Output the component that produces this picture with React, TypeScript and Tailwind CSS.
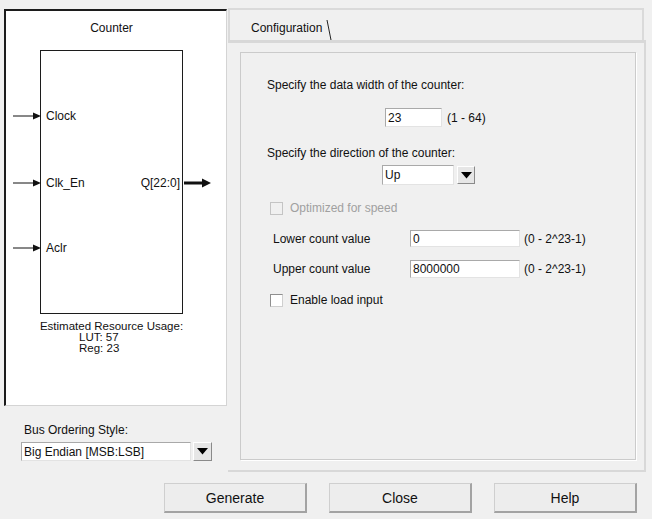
import React from "react";

function InArrow() {
  return (
    <svg className="absolute left-[-28px] top-[2px]" width="28" height="10" viewBox="0 0 28 10">
      <line x1="0" y1="5" x2="22" y2="5" stroke="#111" strokeWidth="1" />
      <polygon points="20,1.5 28,5 20,8.5" fill="#111" />
    </svg>
  );
}

function OutArrow() {
  return (
    <svg className="absolute right-[-30px] top-[2px]" width="28" height="10" viewBox="0 0 28 10">
      <line x1="0" y1="5" x2="20" y2="5" stroke="#111" strokeWidth="3" />
      <polygon points="18,0.5 27,5 18,9.5" fill="#111" />
    </svg>
  );
}

function DropBtn({ cls }: { cls: string }) {
  return (
    <div
      className={`flex items-center justify-center bg-[#e6e6e6] border border-t-white border-l-white border-r-[#8a8a8a] border-b-[#8a8a8a] ${cls}`}
    >
      <svg width="11" height="7" viewBox="0 0 11 7">
        <polygon points="0,0 11,0 5.5,6.5" fill="#000" />
      </svg>
    </div>
  );
}

function Field({ cls, value }: { cls: string; value: string }) {
  return (
    <div
      className={`bg-white border border-t-[#a9a9a9] border-l-[#a9a9a9] border-r-[#e3e3e3] border-b-[#e3e3e3] pl-[2px] flex items-center whitespace-nowrap ${cls}`}
    >
      {value}
    </div>
  );
}

function Btn({ label }: { label: string }) {
  return (
    <div className="w-[143px] h-[30px] flex items-center justify-center bg-[#ededed] border border-[#cfcfcf] border-r-2 border-b-2 border-r-[#a3a3a3] border-b-[#a3a3a3] text-[14px] text-[#111]">
      {label}
    </div>
  );
}

export default function App() {
  return (
    <div className="w-[652px] h-[519px] bg-[#f0f0f0] text-[#111] text-[12px] leading-[14px] flex flex-col overflow-hidden font-['Liberation_Sans',Arial,sans-serif]">
      <div className="flex h-[472px]">
        {/* Left column */}
        <div className="w-[228px] pl-[4px] pt-[9px] flex flex-col">
          <div className="w-[223px] h-[397px] bg-white border-t-2 border-l-2 border-t-[#1c1c1c] border-l-[#1c1c1c] border-r border-b border-r-[#d4d4d4] border-b-[#d4d4d4] flex flex-col">
            <div className="ml-[34px] w-[143px] pt-[10px] text-center">Counter</div>
            <div className="ml-[34px] mt-[15px] w-[143px] h-[264px] border border-[#1c1c1c] pt-[58px] flex flex-col">
              <div className="relative pl-[5px] h-[14px]">
                <InArrow />
                Clock
              </div>
              <div className="relative pl-[5px] pr-[2px] h-[14px] mt-[53px] flex justify-between">
                <InArrow />
                <span>Clk_En</span>
                <span>Q[22:0]</span>
                <OutArrow />
              </div>
              <div className="relative pl-[5px] h-[14px] mt-[51px]">
                <InArrow />
                Aclr
              </div>
            </div>
            <div className="mt-[7px] ml-[14px] w-[183px] text-center text-[11.5px] leading-[11px] whitespace-nowrap">
              Estimated Resource Usage:
            </div>
            <div className="ml-[73px] text-[11.5px] leading-[11px]">LUT: 57</div>
            <div className="ml-[73px] text-[11.5px] leading-[11px]">Reg: 23</div>
          </div>
          <div className="ml-[20px] mt-[17px]">Bus Ordering Style:</div>
          <div className="flex mt-[5px] ml-[17px]">
            <Field cls="w-[170px] h-[19px]" value="Big Endian [MSB:LSB]" />
            <DropBtn cls="ml-[2px] w-[19px] h-[19px]" />
          </div>
        </div>

        {/* Right column */}
        <div className="flex-1 pt-[8px] flex flex-col">
          <div className="w-[416px] h-[32px] border-2 border-b-0 border-[#dadada] pl-[21px] pt-[5px] flex items-center">
            <span>Configuration</span>
            <svg className="ml-[4px] mt-[4px]" width="6" height="22" viewBox="0 0 6 22">
              <line x1="1" y1="1" x2="5" y2="21" stroke="#222" strokeWidth="1" />
            </svg>
          </div>
          <div className="w-[418px] h-[432px] border-t-[3px] border-r-2 border-b-2 border-[#d8d8d8] pt-[9px] pl-[12px]">
            <div className="w-[396px] h-[408px] border border-[#cbcbcb] shadow-[1px_1px_0_#ffffff] flex flex-col">
              <div className="pt-[25px] pl-[26px]">Specify the data width of the counter:</div>
              <div className="flex items-center mt-[16px] ml-[144px]">
                <Field cls="w-[57px] h-[19px]" value="23" />
                <span className="ml-[5px]">(1 - 64)</span>
              </div>
              <div className="mt-[19px] pl-[26px]">Specify the direction of the counter:</div>
              <div className="flex items-center mt-[5px] ml-[141px]">
                <Field cls="w-[72px] h-[20px]" value="Up" />
                <DropBtn cls="ml-[3px] w-[18px] h-[18px]" />
              </div>
              <div className="flex items-center mt-[16px] ml-[29px] h-[14px]">
                <div className="w-[13px] h-[13px] border border-[#c4c4c4] bg-[#f0f0f0]" />
                <span className="ml-[7px] text-[#a0a0a0]">Optimized for speed</span>
              </div>
              <div className="flex items-center mt-[15px] ml-[32px]">
                <span className="w-[137px]">Lower count value</span>
                <Field cls="w-[110px] h-[17px]" value="0" />
                <span className="ml-[4px]">(0 - 2^23-1)</span>
              </div>
              <div className="flex items-center mt-[13px] ml-[32px]">
                <span className="w-[137px]">Upper count value</span>
                <Field cls="w-[110px] h-[18px]" value="8000000" />
                <span className="ml-[4px]">(0 - 2^23-1)</span>
              </div>
              <div className="flex items-center mt-[15px] ml-[29px] h-[14px]">
                <div className="w-[13px] h-[13px] border border-t-[#8f8f8f] border-l-[#8f8f8f] border-r-[#cfcfcf] border-b-[#cfcfcf] bg-white" />
                <span className="ml-[7px]">Enable load input</span>
              </div>
            </div>
          </div>
        </div>
      </div>

      {/* Buttons */}
      <div className="flex pt-[11px] pl-[164px] gap-[22px]">
        <Btn label="Generate" />
        <Btn label="Close" />
        <Btn label="Help" />
      </div>
    </div>
  );
}
